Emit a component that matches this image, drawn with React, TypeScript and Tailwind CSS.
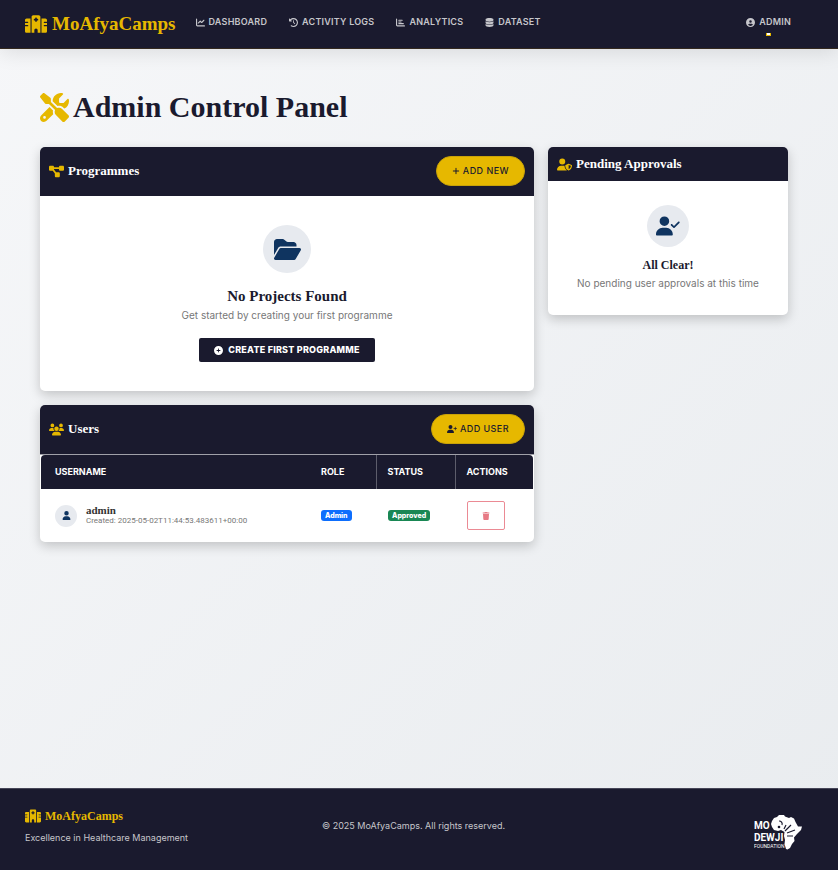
import type { ReactNode } from "react";
import {
  FaChartBar,
  FaChartLine,
  FaCirclePlus,
  FaCircleUser,
  FaClockRotateLeft,
  FaDatabase,
  FaDiagramProject,
  FaFolderOpen,
  FaHospital,
  FaPlus,
  FaScrewdriverWrench,
  FaTrash,
  FaUser,
  FaUserCheck,
  FaUserPlus,
  FaUserShield,
  FaUsers,
} from "react-icons/fa6";

const serif = "font-['Liberation_Serif',serif] font-bold";

function NavLink({ icon, children }: { icon: ReactNode; children: ReactNode }) {
  return (
    <a href="#" className="flex items-center gap-1 text-[9px] leading-3 font-semibold tracking-wide text-[#c6c6cb] uppercase">
      {icon}
      {children}
    </a>
  );
}

function Card({ icon, title, action, children }: { icon: ReactNode; title: string; action?: ReactNode; children: ReactNode }) {
  return (
    <section className="overflow-hidden rounded-[5px] bg-white shadow-[0_4px_12px_rgba(0,0,0,0.2)]">
      <header className={`flex items-center justify-between bg-[#1a1a2e] px-[9px] ${action ? "h-[49px] pb-px" : "h-[34px]"}`}>
        <h2 className={`flex items-center gap-1 text-[13px] leading-4 text-white ${serif}`}>
          <span className="text-[15px] text-[#e6b800]">{icon}</span>
          {title}
        </h2>
        {action}
      </header>
      {children}
    </section>
  );
}

function PillButton({ icon, children }: { icon: ReactNode; children: ReactNode }) {
  return (
    <button
      type="button"
      className="flex h-[30px] items-center gap-[3px] rounded-full border border-[#c9a208] bg-[#e6b800] px-[15px] text-[9px] font-medium tracking-wider text-[#1a1a2e] uppercase"
    >
      {icon}
      {children}
    </button>
  );
}

function FoundationLogo() {
  return (
    <svg className="h-9 w-12" viewBox="0 0 48 36" fill="#fff" role="img" aria-label="Mo Dewji Foundation">
      <path d="M18 7 20 4 23 3 25 1 30 1 31 2.500 35 4 37 3 40 4.500 41.500 8 44 12.500 48 12.500 47 16 43 20 40 23.500 40.500 27 38 30 36 34 33.500 35.500 32 35 30.500 30 31 26 30 22 30.500 18 27 16 24 17 20 16 18 13 17 10Z" />
      <path
        d="M25 7a3 3 0 0 1 3 4M31 17l6-6M33 19l8-3M33 22l6 0M30 15l2-4"
        fill="none"
        stroke="#1a1a2e"
        strokeWidth="1.200"
      />
      <circle cx="25" cy="13" r="1.300" fill="#1a1a2e" />
      <text x="0" y="15" fontSize="10" fontWeight="700" fontFamily="Roboto, sans-serif">MO</text>
      <text x="0" y="27" fontSize="10" fontWeight="700" fontFamily="Roboto, sans-serif">DEWJI</text>
      <text x="0" y="34" fontSize="5" fontFamily="Roboto, sans-serif">FOUNDATION</text>
    </svg>
  );
}

export default function App() {
  return (
    <div className="flex min-h-screen flex-col bg-linear-135 from-[#f6f7f9] to-[#e9ecef] font-[Inter,sans-serif] text-[#1a1a2e]">
      <header className="flex h-[49px] items-center border-b border-[#34291f] bg-[#1a1a2e] pr-[47px] pl-[25px] shadow-[0_4px_20px_rgba(0,0,0,0.1)]">
        <a href="#" className={`flex items-center gap-[5px] text-[19px] leading-6 text-[#e6b800] ${serif}`}>
          <FaHospital size={22} />
          MoAfyaCamps
        </a>
        <nav className="mb-1 ml-5 flex flex-1 items-center gap-[22px]">
          <NavLink icon={<FaChartLine size={9} />}>Dashboard</NavLink>
          <NavLink icon={<FaClockRotateLeft size={9} />}>Activity Logs</NavLink>
          <NavLink icon={<FaChartBar size={9} />}>Analytics</NavLink>
          <NavLink icon={<FaDatabase size={9} />}>Dataset</NavLink>
        </nav>
        <div className="flex flex-col items-center gap-[5px] pt-1">
          <NavLink icon={<FaCircleUser size={9} />}>Admin</NavLink>
          <span className="h-[3px] w-[5px] border-x border-b border-[#e6b800] bg-white" />
        </div>
      </header>

      <main className="flex-1 pt-10 pr-[50px] pb-10 pl-10">
        <h1 className={`flex items-center gap-1 text-[30px] leading-9 ${serif}`}>
          <FaScrewdriverWrench size={29} color="#e6b800" />
          Admin Control Panel
        </h1>

        <div className="mt-[22px] grid grid-cols-3 items-start gap-[14px]">
          <div className="col-span-2 flex flex-col gap-[14px]">
            <Card
              icon={<FaDiagramProject />}
              title="Programmes"
              action={<PillButton icon={<FaPlus size={8} />}>Add New</PillButton>}
            >
              <div className="flex flex-col items-center px-4 py-[29px]">
                <span className="flex size-12 items-center justify-center rounded-full bg-[#e7eaef] text-[#0f3460]">
                  <FaFolderOpen size={27} />
                </span>
                <h3 className={`mt-[14px] text-[15px] leading-[18px] ${serif}`}>No Projects Found</h3>
                <p className="mt-[3px] text-[10px] leading-[14px] text-[#777]">Get started by creating your first programme</p>
                <button
                  type="button"
                  className="mt-4 flex h-6 items-center gap-[5px] rounded-xs bg-[#1a1a2e] px-[15px] text-[9px] font-extrabold tracking-wide text-white uppercase"
                >
                  <FaCirclePlus size={9} />
                  Create First Programme
                </button>
              </div>
            </Card>

            <Card
              icon={<FaUsers />}
              title="Users"
              action={<PillButton icon={<FaUserPlus size={10} />}>Add User</PillButton>}
            >
              <div className="border-t border-[#a0a0a8] px-px">
                <table className="w-full table-fixed text-left">
                  <colgroup>
                    <col />
                    <col className="w-[67px]" />
                    <col className="w-[79px]" />
                    <col className="w-[78px]" />
                  </colgroup>
                  <thead>
                    <tr className="h-[34px] bg-[#1a1a2e] text-[9px] font-bold text-white uppercase">
                      <th className="rounded-tl-[4px] pl-[14px]">Username</th>
                      <th className="pl-3">Role</th>
                      <th className="border-l border-[#5d5d6b] pl-[11px]">Status</th>
                      <th className="rounded-tr-[4px] border-l border-[#5d5d6b] pl-[11px]">Actions</th>
                    </tr>
                  </thead>
                  <tbody>
                    <tr className="h-[53px]">
                      <td className="pl-[14px]">
                        <div className="flex items-center gap-[9px]">
                          <span className="flex size-[22px] items-center justify-center rounded-full bg-[#e7eaef] text-[#0f3460]">
                            <FaUser size={9} />
                          </span>
                          <div>
                            <div className={`text-[11px] leading-[11px] text-[#333] ${serif}`}>admin</div>
                            <div className="font-[Roboto,sans-serif] text-[8px] leading-[10px] text-[#777]">
                              Created: 2025-05-02T11:44:53.483611+00:00
                            </div>
                          </div>
                        </div>
                      </td>
                      <td className="pl-3">
                        <span className="block w-fit rounded-[3px] bg-[#0d6efd] px-1 text-[7px] leading-[11px] font-extrabold text-white">Admin</span>
                      </td>
                      <td className="pl-3">
                        <span className="block w-fit rounded-[3px] bg-[#198754] px-1 text-[7px] leading-[11px] font-extrabold text-white">Approved</span>
                      </td>
                      <td className="pl-3">
                        <button
                          type="button"
                          aria-label="Delete user"
                          className="flex h-[29px] w-[38px] items-center justify-center rounded-xs border border-[#eb8a94] text-[#e77a85]"
                        >
                          <FaTrash size={8} />
                        </button>
                      </td>
                    </tr>
                  </tbody>
                </table>
              </div>
            </Card>
          </div>

          <Card icon={<FaUserShield />} title="Pending Approvals">
            <div className="flex flex-col items-center px-4 py-6">
              <span className="flex size-[42px] items-center justify-center rounded-full bg-[#e7eaef] text-[#0f3460]">
                <FaUserCheck size={24} />
              </span>
              <h3 className={`mt-[10px] text-[12px] leading-4 ${serif}`}>All Clear!</h3>
              <p className="mt-[3px] mb-px text-[10px] leading-[14px] whitespace-nowrap text-[#777]">No pending user approvals at this time</p>
            </div>
          </Card>
        </div>
      </main>

      <footer className="flex h-[82px] items-center justify-between border-t border-[#464658] bg-[#1a1a2e] pr-9 pb-2 pl-[25px] text-[#c6c6cb]">
        <div className="flex-1">
          <div className={`flex items-center gap-1 text-[12px] leading-4 text-[#e6b800] ${serif}`}>
            <FaHospital size={16} />
            MoAfyaCamps
          </div>
          <p className="mt-2 text-[9px] leading-3">Excellence in Healthcare Management</p>
        </div>
        <p className="text-[9px] leading-3">© 2025 MoAfyaCamps. All rights reserved.</p>
        <div className="flex flex-1 justify-end pt-3">
          <FoundationLogo />
        </div>
      </footer>
    </div>
  );
}
